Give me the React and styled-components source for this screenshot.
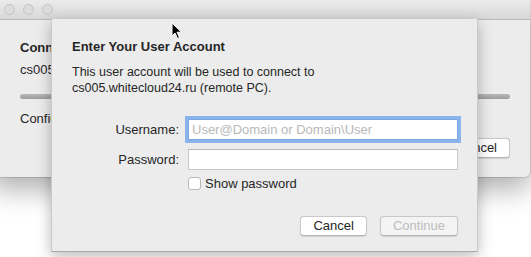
import React from 'react'
import styled, { createGlobalStyle } from 'styled-components'

const Global = createGlobalStyle`
    html, body {
        margin: 0;
        padding: 0;
        background: #ffffff;
    }
    body {
        font-family: "Liberation Sans", Arial, sans-serif;
        font-size: 13px;
        color: #262626;
    }
`

const Desktop = styled.div`
    position: relative;
    width: 531px;
    height: 257px;
    overflow: hidden;
    background: #ffffff;
`

// the progress window behind the sheet
const Window = styled.div`
    position: absolute;
    left: -10px;
    top: 0;
    width: 540px;
    height: 177px;
    background: #ececec;
    border-radius: 0 0 5px 5px;
    box-shadow: 0 12px 28px rgba(0, 0, 0, 0.32), 0 0 0 1px rgba(0, 0, 0, 0.12);
    display: flex;
    flex-direction: column;
`

const TitleBar = styled.div`
    height: 19px;
    flex: none;
    display: flex;
    align-items: center;
    gap: 8px;
    padding-left: 14px;
    background: linear-gradient(#ebebeb, #d8d8d8);
    border-bottom: 1px solid #b9b9b9;
`

const Light = styled.span`
    width: 11px;
    height: 11px;
    border-radius: 50%;
    background: #dcdcdc;
    border: 1px solid #c4c4c4;
    box-sizing: border-box;
`

const WindowBody = styled.div`
    flex: 1;
    display: flex;
    flex-direction: column;
    padding: 20px 20px 0 30px;
`

const Heading = styled.div`
    font-weight: bold;
    font-size: 13px;
    line-height: 16px;
`

const Line = styled.div`
    font-size: ${p => p.size || 13}px;
    line-height: 16px;
    margin-top: ${p => p.gap || 0}px;
`

const Progress = styled.div`
    height: 5px;
    margin-top: 16px;
    border-radius: 3px;
    background: linear-gradient(#b8b8b8, #9d9d9d);
`

const ButtonRow = styled.div`
    display: flex;
    justify-content: flex-end;
    margin-top: ${p => p.gap || 0}px;
`

const Button = styled.button`
    font-family: inherit;
    font-size: 13px;
    height: 20px;
    min-width: 66px;
    padding: 0 12px;
    border-radius: 4px;
    border: 1px solid #c8c8c8;
    border-bottom-color: #b4b4b4;
    background: ${p => (p.disabled ? '#f4f4f4' : '#ffffff')};
    color: ${p => (p.disabled ? '#bdbdbd' : '#262626')};
    box-shadow: 0 0.5px 1px rgba(0, 0, 0, 0.12);
    line-height: 18px;
`

const Sheet = styled.div`
    position: absolute;
    left: 51px;
    top: 19px;
    width: 427px;
    height: 233px;
    box-sizing: border-box;
    background: #ececec;
    border: 1px solid #c9c9c9;
    border-top: none;
    border-bottom-color: #a9a9a9;
    box-shadow: 0 4px 14px rgba(0, 0, 0, 0.28);
    padding: 20px 19px 15px 20px;
    display: flex;
    flex-direction: column;
`

const Form = styled.div`
    display: grid;
    grid-template-columns: 107px 270px;
    column-gap: 9px;
    row-gap: 9px;
    align-items: center;
    margin-top: 23px;
`

const Label = styled.label`
    text-align: right;
    font-size: 13px;
`

const Input = styled.input`
    height: 21px;
    box-sizing: border-box;
    font-family: inherit;
    font-size: 13px;
    padding: 0 3px;
    border: 1px solid ${p => (p.focused ? '#7aa7e6' : '#c9c9c9')};
    border-top-color: ${p => (p.focused ? '#7aa7e6' : '#b5b5b5')};
    background: #ffffff;
    outline: none;
    box-shadow: ${p => (p.focused ? '0 0 0 3px #8cb4ec' : 'none')};
    &::placeholder {
        color: #b9b9b9;
    }
`

const Check = styled.label`
    grid-column: 2;
    display: flex;
    align-items: center;
    gap: 4px;
    margin-top: -3px;
    font-size: 13px;
`

const Box = styled.span`
    width: 13px;
    height: 13px;
    box-sizing: border-box;
    border: 1px solid #b7b7b7;
    border-radius: 3px;
    background: #ffffff;
`

const Footer = styled.div`
    margin-top: auto;
    display: flex;
    justify-content: flex-end;
    gap: 13px;
`

const Cursor = styled.svg`
    position: absolute;
    left: 171px;
    top: 22px;
`

export default function App() {
    return (
        <Desktop>
            <Global />
            <Window>
                <TitleBar>
                    <Light />
                    <Light />
                    <Light />
                </TitleBar>
                <WindowBody>
                    <Heading>Connecting to RD Gateway</Heading>
                    <Line gap={6}>cs005.whitecloud24.ru</Line>
                    <Progress />
                    <Line gap={12}>Configuring remote PC...</Line>
                    <ButtonRow gap={11}>
                        <Button>Cancel</Button>
                    </ButtonRow>
                </WindowBody>
            </Window>

            <Sheet>
                <Heading>Enter Your User Account</Heading>
                <Line gap={9} size={12.5}>This user account will be used to connect to</Line>
                <Line size={12.5}>cs005.whitecloud24.ru (remote PC).</Line>
                <Form>
                    <Label>Username:</Label>
                    <Input focused placeholder="User@Domain or Domain\User" />
                    <Label>Password:</Label>
                    <Input type="password" />
                    <Check>
                        <Box />
                        Show password
                    </Check>
                </Form>
                <Footer>
                    <Button>Cancel</Button>
                    <Button disabled>Continue</Button>
                </Footer>
            </Sheet>

            <Cursor width="12" height="18" viewBox="0 0 12 18">
                <path d="M1 1 L1 14 L4 11 L6.5 16.5 L8.5 15.5 L6 10.2 L10.5 10.2 Z" fill="#000" stroke="#fff" strokeWidth="1" strokeLinejoin="round" />
            </Cursor>
        </Desktop>
    )
}
